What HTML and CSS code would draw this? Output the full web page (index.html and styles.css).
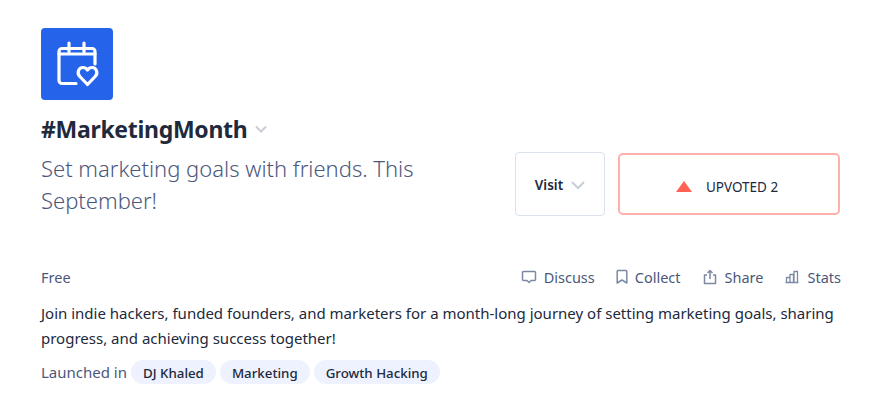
FILE: index.html
```html
<!DOCTYPE html>
<html lang="en">
<head>
  <meta charset="UTF-8" />
  <title>#MarketingMonth</title>
  <link rel="stylesheet" href="styles.css">
</head>
<body>
  <div class="product">
    <div class="logo">
      <svg width="72" height="72" viewBox="0 0 72 72" fill="none" stroke="#fff" stroke-width="3.200" stroke-linecap="round" stroke-linejoin="round">
        <path d="M35 55.500H21a3 3 0 0 1-3-3V23.500a3 3 0 0 1 3-3h30a3 3 0 0 1 3 3V36"/>
        <path d="M18 26h36M28 15v8.500M43 15v8.500"/>
        <path d="M46.500 56.500L38.800 48.500C35.500 45 37.500 39.500 42 39.500C44 39.500 45.500 40.500 46.500 42C47.500 40.500 49 39.500 51 39.500C55.500 39.500 57.500 45 54.200 48.500Z"/>
      </svg>
    </div>
    <div class="title-row">
      <h1 class="title">#MarketingMonth</h1>
      <svg class="chevron" width="14" height="14" viewBox="0 0 14 14" fill="none" stroke="#c9ced6" stroke-width="2"><path d="M2 4.500l5 5 5-5"/></svg>
    </div>
    <div class="main-row">
      <p class="tagline">Set marketing goals with friends. This September!</p>
      <div class="actions">
        <a class="visit-btn">Visit
          <svg width="14" height="14" viewBox="0 0 14 14" fill="none" stroke="#c9ced6" stroke-width="2"><path d="M1 4l6 6 6-6"/></svg>
        </a>
        <a class="upvote-btn"><span class="triangle"></span>UPVOTED 2</a>
      </div>
    </div>
    <div class="meta-row">
      <span class="price">Free</span>
      <div class="links">
        <a class="link">
          <svg width="16" height="16" viewBox="0 0 16 16" fill="none" stroke="#7d88a3" stroke-width="1.500" stroke-linejoin="round"><path d="M2.500 2.500h11a1 1 0 0 1 1 1v7a1 1 0 0 1-1 1H10L8 13.500l-2-2H2.500a1 1 0 0 1-1-1v-7a1 1 0 0 1 1-1z"/></svg>
          Discuss</a>
        <a class="link">
          <svg width="12" height="16" viewBox="2 0 12 16" fill="none" stroke="#7d88a3" stroke-width="1.500" stroke-linejoin="round"><path d="M4 1.500h8a.8.8 0 0 1 .8.800V14L8 11l-4.800 3V2.300a.8.8 0 0 1 .8-.8z"/></svg>
          Collect</a>
        <a class="link">
          <svg width="16" height="16" viewBox="0 0 16 16" fill="none" stroke="#7d88a3" stroke-width="1.500" stroke-linejoin="round"><path d="M5 6H2.500v8.500h11V6H11M8 10V1.500M5.500 4L8 1.500 10.500 4"/></svg>
          Share</a>
        <a class="link">
          <svg width="16" height="16" viewBox="0 0 16 16" fill="none" stroke="#7d88a3" stroke-width="1.300" stroke-linejoin="round"><path d="M1.500 13.500h13M2.500 13.500V8.500h3.500v5M6 13.500V5.500h3.500v8M10 13.500V2.500h3.500v11"/></svg>
          Stats</a>
      </div>
    </div>
    <p class="description">Join indie hackers, funded founders, and marketers for a month-long journey of setting marketing goals, sharing progress, and achieving success together!</p>
    <div class="topics">
      <span class="topics-label">Launched in</span>
      <a class="topic">DJ Khaled</a>
      <a class="topic">Marketing</a>
      <a class="topic">Growth Hacking</a>
    </div>
  </div>
</body>
</html>
```

FILE: styles.css
```css
body {
  margin: 0;
  background-color: #fff;
  font-family: "Noto Sans", sans-serif;
  color: #21293c;
}

.product {
  padding: 28px 37px 0 41px;
}

.logo {
  width: 72px;
  height: 72px;
  background-color: #2563eb;
  border-radius: 4px;
  display: flex;
}

.title-row {
  display: flex;
  align-items: center;
  gap: 7px;
  margin-top: 13px;
}

.title {
  margin: 0;
  font-size: 23px;
  letter-spacing: -0.3px;
  line-height: 32px;
  font-weight: 700;
}

.main-row {
  display: flex;
  justify-content: space-between;
  margin-top: 6px;
}

.tagline {
  margin: 1px 0 0;
  width: 400px;
  font-size: 22px;
  line-height: 32px;
  font-weight: 300;
  color: #4b587c;
}

.actions {
  display: flex;
  align-items: flex-start;
  gap: 13px;
  margin-top: 1px;
}

.visit-btn {
  box-sizing: border-box;
  width: 90px;
  height: 64px;
  border: 1px solid #dce3ef;
  border-radius: 4px;
  padding-top: 2px;
  display: flex;
  align-items: center;
  justify-content: center;
  gap: 8px;
  font-size: 13.500px;
  font-weight: 600;
}

.upvote-btn {
  box-sizing: border-box;
  width: 222px;
  height: 62px;
  margin-top: 1px;
  border: 2px solid #ffb0ab;
  border-radius: 5px;
  padding: 5px 4px 0 0;
  display: flex;
  align-items: center;
  justify-content: center;
  gap: 14px;
  font-size: 13.500px;
  font-weight: 400;
}

.triangle {
  width: 0;
  height: 0;
  border-left: 8px solid transparent;
  border-right: 8px solid transparent;
  border-bottom: 11px solid #ff6154;
}

.meta-row {
  display: flex;
  justify-content: space-between;
  align-items: center;
  margin: 49px -1px 0 0;
  font-size: 14.500px;
  line-height: 24px;
  color: #4b587c;
}

.links {
  display: flex;
  gap: 21px;
}

.link {
  display: flex;
  align-items: center;
  gap: 7px;
}

.description {
  margin: 12px 0 0;
  font-size: 15px;
  line-height: 25px;
  color: #21293c;
}

.topics {
  display: flex;
  align-items: center;
  gap: 4px;
  margin-top: 9px;
}

.topics-label {
  font-size: 15px;
  color: #4b587c;
}

.topic {
  background-color: #eef2fe;
  border-radius: 12px;
  padding: 1px 12px 0;
  height: 23px;
  line-height: 25px;
  font-size: 13.300px;
  font-weight: 500;
}
```
